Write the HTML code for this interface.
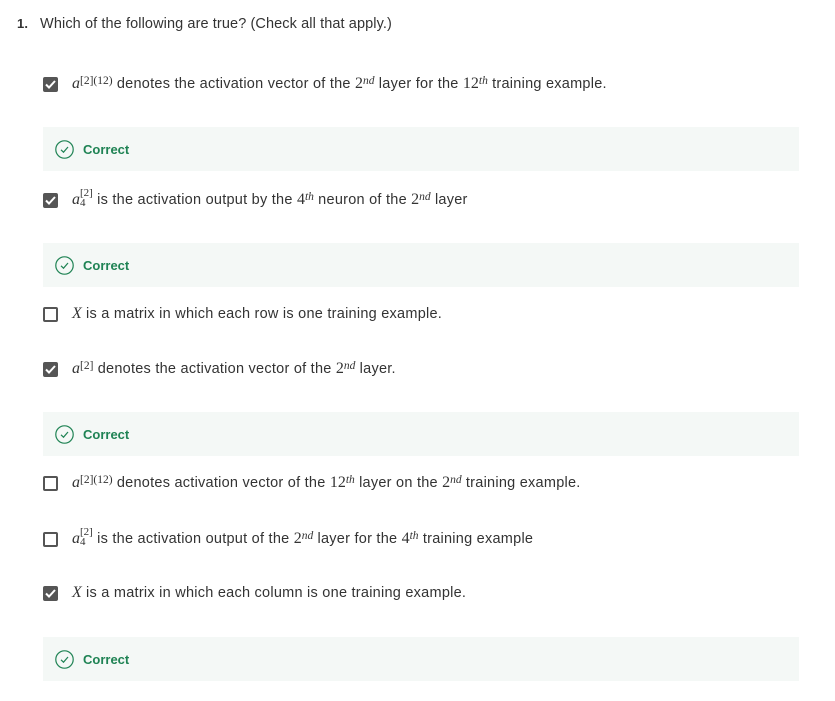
<!DOCTYPE html>
<html><head><meta charset="utf-8"><style>
body{margin:0;width:835px;height:701px;background:#fff;font-family:"Liberation Sans",sans-serif;color:#1f1f1f;position:relative;overflow:hidden}
.a{position:absolute;white-space:nowrap}
.q{left:17px;top:16px;font-size:14.5px;color:#333;letter-spacing:0.1px}
.q b{font-size:13px;margin-right:12px}
.row{position:absolute;left:43px;height:18px;display:flex;align-items:center;font-size:14.5px;color:#333;letter-spacing:0.25px;white-space:nowrap}
.cb{width:15px;height:15px;box-sizing:border-box;border:2px solid #555;border-radius:2px;margin-right:14px;flex:none;display:flex;align-items:center;justify-content:center}
.cb.on{background:#555}
.m{font-family:"Liberation Serif",serif;font-style:italic;font-size:16px;letter-spacing:0}
.n{font-family:"Liberation Serif",serif;font-size:16px;letter-spacing:0}
sup,sub{font-family:"Liberation Serif",serif;font-size:11.5px;font-style:normal;letter-spacing:0;position:relative;top:-3px}
sup i,sub i{font-style:italic}
.ok{position:absolute;left:43px;width:756px;height:44px;background:#f4f8f6;display:flex;align-items:center}
.ok svg{margin-left:12px;margin-right:9px}
.ok span{color:#1f8354;font-weight:bold;font-size:13px}
.st{display:inline-flex;flex-direction:column;font-family:'Liberation Serif',serif;font-size:11px;line-height:10px;margin-top:-4px;letter-spacing:0}
</style></head><body>
<div class="a q"><b>1.</b>Which of the following are true? (Check all that apply.)</div>

<div class="row" style="top:75px"><span class="cb on"><svg width="11" height="9" viewBox="0 0 11 9"><path d="M1 4.5 L4 7.5 L10 1" stroke="#fff" stroke-width="2" fill="none"/></svg></span><span class="m">a</span><sup>[2](12)</sup>&nbsp;denotes the activation vector of the&nbsp;<span class="n">2</span><sup><i>nd</i></sup>&nbsp;layer for the&nbsp;<span class="n">12</span><sup><i>th</i></sup>&nbsp;training example.</div>
<div class="ok" style="top:127px"><svg width="19" height="19" viewBox="0 0 19 19"><circle cx="9.5" cy="9.5" r="8.7" stroke="#1f8354" stroke-width="1.2" fill="none"/><path d="M6 9.8 L8.5 12.2 L13 7" stroke="#1f8354" stroke-width="1.2" fill="none"/></svg><span>Correct</span></div>

<div class="row" style="top:191px"><span class="cb on"><svg width="11" height="9" viewBox="0 0 11 9"><path d="M1 4.5 L4 7.5 L10 1" stroke="#fff" stroke-width="2" fill="none"/></svg></span><span class="m">a</span><span class="st"><span>[2]</span><span>4</span></span>&nbsp;is the activation output by the&nbsp;<span class="n">4</span><sup><i>th</i></sup>&nbsp;neuron of the&nbsp;<span class="n">2</span><sup><i>nd</i></sup>&nbsp;layer</div>
<div class="ok" style="top:243px"><svg width="19" height="19" viewBox="0 0 19 19"><circle cx="9.5" cy="9.5" r="8.7" stroke="#1f8354" stroke-width="1.2" fill="none"/><path d="M6 9.8 L8.5 12.2 L13 7" stroke="#1f8354" stroke-width="1.2" fill="none"/></svg><span>Correct</span></div>

<div class="row" style="top:305px"><span class="cb"></span><span class="m">X</span>&nbsp;is a matrix in which each row is one training example.</div>

<div class="row" style="top:360px"><span class="cb on"><svg width="11" height="9" viewBox="0 0 11 9"><path d="M1 4.5 L4 7.5 L10 1" stroke="#fff" stroke-width="2" fill="none"/></svg></span><span class="m">a</span><sup>[2]</sup>&nbsp;denotes the activation vector of the&nbsp;<span class="n">2</span><sup><i>nd</i></sup>&nbsp;layer.</div>
<div class="ok" style="top:412px"><svg width="19" height="19" viewBox="0 0 19 19"><circle cx="9.5" cy="9.5" r="8.7" stroke="#1f8354" stroke-width="1.2" fill="none"/><path d="M6 9.8 L8.5 12.2 L13 7" stroke="#1f8354" stroke-width="1.2" fill="none"/></svg><span>Correct</span></div>

<div class="row" style="top:474px"><span class="cb"></span><span class="m">a</span><sup>[2](12)</sup>&nbsp;denotes activation vector of the&nbsp;<span class="n">12</span><sup><i>th</i></sup>&nbsp;layer on the&nbsp;<span class="n">2</span><sup><i>nd</i></sup>&nbsp;training example.</div>

<div class="row" style="top:530px"><span class="cb"></span><span class="m">a</span><span class="st"><span>[2]</span><span>4</span></span>&nbsp;is the activation output of the&nbsp;<span class="n">2</span><sup><i>nd</i></sup>&nbsp;layer for the&nbsp;<span class="n">4</span><sup><i>th</i></sup>&nbsp;training example</div>

<div class="row" style="top:584px"><span class="cb on"><svg width="11" height="9" viewBox="0 0 11 9"><path d="M1 4.5 L4 7.5 L10 1" stroke="#fff" stroke-width="2" fill="none"/></svg></span><span class="m">X</span>&nbsp;is a matrix in which each column is one training example.</div>
<div class="ok" style="top:637px"><svg width="19" height="19" viewBox="0 0 19 19"><circle cx="9.5" cy="9.5" r="8.7" stroke="#1f8354" stroke-width="1.2" fill="none"/><path d="M6 9.8 L8.5 12.2 L13 7" stroke="#1f8354" stroke-width="1.2" fill="none"/></svg><span>Correct</span></div>
</body></html>
